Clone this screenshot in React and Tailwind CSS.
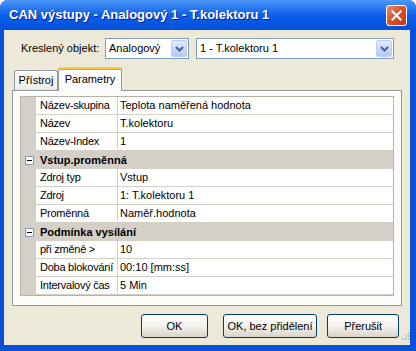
import React from "react";

function Chevron() {
  return (
    <svg width="9" height="6" viewBox="0 0 9 6">
      <path d="M1 1 L4.5 4.5 L8 1" fill="none" stroke="#4D6185" strokeWidth="2" />
    </svg>
  );
}

function Combo({ text, width }) {
  return (
    <div className={`flex h-[21px] items-center border border-[#7F9DB9] bg-white ${width}`}>
      <span className="flex-1 truncate pl-[3px] text-[11px] text-black">{text}</span>
      <div className="mr-[1px] flex h-[17px] w-[16px] items-center justify-center rounded-[2px] border border-[#B9CCF9] bg-linear-to-b from-[#E1EAFE] to-[#B4C8F6]">
        <Chevron />
      </div>
    </div>
  );
}

function MinusBox() {
  return (
    <div className="flex h-[9px] w-[9px] items-center justify-center border border-[#7F9DB9] bg-white">
      <div className="h-[1px] w-[5px] bg-black" />
    </div>
  );
}

function Row({ name, value }) {
  return (
    <div className="flex h-[18px]">
      <div className="w-[15px] shrink-0 bg-[#D4D0C8]" />
      <div className="flex w-[82px] shrink-0 items-center overflow-hidden whitespace-nowrap border-b border-r border-[#D4D0C8] pl-[4px] tracking-[-0.25px] text-black">{name}</div>
      <div className="flex flex-1 items-center whitespace-nowrap border-b border-[#D4D0C8] pl-[2px] text-black">{value}</div>
    </div>
  );
}

function Category({ name }) {
  return (
    <div className="flex h-[18px] items-center bg-[#D4D0C8]">
      <div className="flex w-[15px] justify-center pl-[1px]">
        <MinusBox />
      </div>
      <div className="pl-[4px] font-bold text-black">{name}</div>
    </div>
  );
}

function XPButton({ children, width }) {
  return (
    <div className={`flex h-[24px] items-center justify-center rounded-[3px] border border-[#003C74] bg-linear-to-b from-[#FFFFFF] via-[#F3F2EE] to-[#D8D4C8] text-black ${width}`}>
      {children}
    </div>
  );
}

export default function App() {
  return (
    <div className="h-[351px] w-[416px] bg-white font-['Liberation_Sans',sans-serif] text-[11px]">
      <div className="flex h-full flex-col rounded-t-[8px] bg-[#0A4FD8]">
        <div className="flex h-[30px] items-center rounded-t-[8px] bg-linear-to-b from-[#4A96F8] via-[#0A5FEB] to-[#0550DA] pl-[9px] pr-[9px]">
          <span className="flex-1 text-[13px] font-bold text-white [text-shadow:1px_1px_0_#0A1E8C]">
            CAN výstupy - Analogový 1 - T.kolektoru 1
          </span>
          <div className="flex h-[21px] w-[21px] items-center justify-center rounded-[3px] border border-white bg-linear-to-br from-[#E9876A] via-[#D9502A] to-[#C03A14]">
            <svg width="11" height="11" viewBox="0 0 11 11">
              <path d="M1.5 1.5 L9.5 9.5 M9.5 1.5 L1.5 9.5" stroke="white" strokeWidth="2" strokeLinecap="square" />
            </svg>
          </div>
        </div>
        <div className="mb-[6px] ml-[4px] mr-[6px] flex flex-1 flex-col bg-[#ECE9D8]">
          <div className="mt-[8px] flex items-center pl-[17px]">
            <span className="w-[84px] text-black">Kreslený objekt:</span>
            <Combo text="Analogový" width="w-[84px]" />
            <div className="w-[7px]" />
            <Combo text="1 - T.kolektoru 1" width="w-[198px]" />
          </div>
          <div className="mt-[8px] flex items-end pl-[10px]">
            <div className="flex h-[20px] w-[44px] items-center justify-center rounded-t-[3px] border border-b-0 border-[#919B9C] bg-linear-to-b from-white to-[#ECEBE5] text-black">
              Přístroj
            </div>
            <div className="relative z-10 -mb-[1px] flex h-[24px] w-[64px] flex-col rounded-t-[3px] border-x border-[#919B9C] bg-[#FCFCFE]">
              <div className="-mx-[1px] h-[3px] rounded-t-[3px] border-b border-[#E6A21A] bg-[#FFC83C]" />
              <div className="flex flex-1 items-center justify-center pb-[2px] text-black">Parametry</div>
            </div>
          </div>
          <div className="ml-[8px] flex h-[216px] w-[390px] flex-col border border-[#919B9C] bg-[#FBFBF8] px-[7px] pt-[5px]">
            <div className="flex flex-col border border-[#B5B2A8] bg-white">
              <Row name="Název-skupina" value="Teplota naměřená hodnota" />
              <Row name="Název" value="T.kolektoru" />
              <Row name="Název-Index" value="1" />
              <Category name="Vstup.proměnná" />
              <Row name="Zdroj typ" value="Vstup" />
              <Row name="Zdroj" value="1: T.kolektoru 1" />
              <Row name="Proměnná" value="Naměř.hodnota" />
              <Category name="Podmínka vysílání" />
              <Row name="při změně >" value="10" />
              <Row name="Doba blokování" value="00:10 [mm:ss]" />
              <Row name="Intervalový čas" value="5 Min" />
            </div>
          </div>
          <div className="mt-[8px] flex items-start pl-[137px]">
            <XPButton width="w-[67px]">OK</XPButton>
            <div className="w-[15px]" />
            <XPButton width="w-[95px]">OK, bez přidělení</XPButton>
            <div className="w-[10px]" />
            <XPButton width="w-[72px]">Přerušit</XPButton>
            <div className="ml-[1px] mt-[16px] flex h-[10px] w-[10px] items-end justify-end">
              <svg width="10" height="10" viewBox="0 0 10 10">
                <rect x="8" y="2" width="2" height="2" fill="#C4C1B4" />
                <rect x="5" y="5" width="2" height="2" fill="#C4C1B4" />
                <rect x="8" y="5" width="2" height="2" fill="#C4C1B4" />
                <rect x="2" y="8" width="2" height="2" fill="#C4C1B4" />
                <rect x="5" y="8" width="2" height="2" fill="#C4C1B4" />
                <rect x="8" y="8" width="2" height="2" fill="#C4C1B4" />
              </svg>
            </div>
          </div>
        </div>
      </div>
    </div>
  );
}
